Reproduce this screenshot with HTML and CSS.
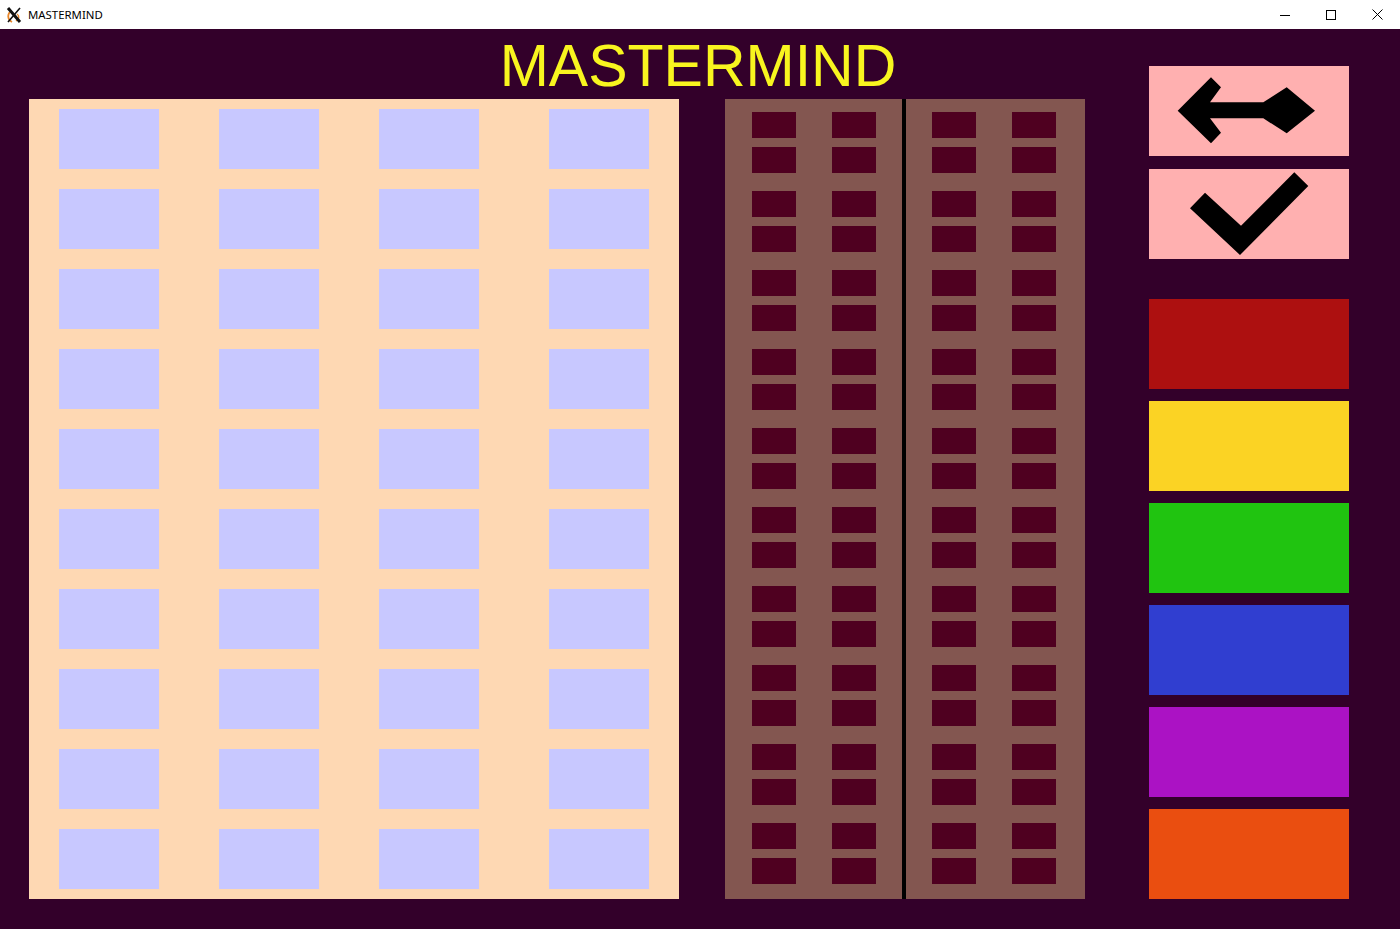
FILE: index.html
```html
<!DOCTYPE html>
<html>
<head>
<meta charset="UTF-8">
<title>MASTERMIND</title>
<link rel="stylesheet" href="styles.css">
</head>
<body>
<div class="titlebar">
	<div class="app">
		<svg class="logo" width="16" height="18" viewBox="0 0 16 18">
			<path d="M6 16 C1 13 1 7 6 5" fill="none" stroke="#e8862a" stroke-width="1.8"/>
			<path d="M11 8 C14 10 13 13 10 15" fill="none" stroke="#e8862a" stroke-width="1.4"/>
			<path d="M2 2 L14 16" stroke="#111" stroke-width="3"/>
			<path d="M14 2 L2 16" stroke="#111" stroke-width="1.6"/>
		</svg>
		<span class="app_name">MASTERMIND</span>
	</div>
	<div class="controls">
		<span class="ctl"><svg width="10" height="10" viewBox="0 0 10 10"><path d="M0 5.5 H10" stroke="#000" stroke-width="1"/></svg></span>
		<span class="ctl"><svg width="10" height="10" viewBox="0 0 10 10"><rect x="0.5" y="0.5" width="9" height="9" fill="none" stroke="#000" stroke-width="1"/></svg></span>
		<span class="ctl"><svg width="11" height="11" viewBox="0 0 11 11"><path d="M0.5 0.5 L10.5 10.5 M10.5 0.5 L0.5 10.5" stroke="#000" stroke-width="1"/></svg></span>
	</div>
</div>
<div class="game">
	<h1 class="title">MASTERMIND</h1>
	<div class="board" id="board"></div>
	<div class="score">
		<div class="half"></div>
		<div class="divider"></div>
		<div class="half right"></div>
	</div>
	<div class="side">
		<a class="btn" href="javascript:;">
			<svg width="200" height="90" viewBox="0 0 200 90">
				<polygon points="28.7,44.7 62,11.3 72,21.3 61,36.3 114.3,36.3 137.7,21.3 166,44.7 137.7,67.3 114.3,52.3 61,52.3 72,66.7 62,77.3" fill="#000"/>
			</svg>
		</a>
		<a class="btn" href="javascript:;">
			<svg width="200" height="90" viewBox="0 0 200 90">
				<polygon points="56,23.7 41,39.3 91,86 159.3,17 145.3,3.3 92,56.7" fill="#000"/>
			</svg>
		</a>
		<div class="colors">
			<a class="color red" href="javascript:;"></a>
			<a class="color yellow" href="javascript:;"></a>
			<a class="color green" href="javascript:;"></a>
			<a class="color blue" href="javascript:;"></a>
			<a class="color purple" href="javascript:;"></a>
			<a class="color orange" href="javascript:;"></a>
		</div>
	</div>
</div>
<script>
	"use strict"
	var board = document.getElementById('board');
	for(var i=0;i<40;i++){
		var hole = document.createElement('span');
		hole.className = 'hole';
		board.appendChild(hole);
	}
	// petits trous de score
	var halves = document.querySelectorAll('.half');
	for(var h=0;h<halves.length;h++){
		for(var r=0;r<10;r++){
			var group = document.createElement('div');
			group.className = 'group';
			for(var k=0;k<4;k++){
				var pin = document.createElement('span');
				pin.className = 'pin';
				group.appendChild(pin);
			}
			halves[h].appendChild(group);
		}
	}
</script>
</body>
</html>
```

FILE: styles.css
```css
*{margin: 0;padding: 0;box-sizing: border-box;}
html,body{
	width: 1400px;
	height: 929px;
	overflow: hidden;
	background: #33002a;
}
/* barre de fenetre */
.titlebar{
	height: 29px;
	background: #fff;
	display: flex;
	justify-content: space-between;
	align-items: center;
}
.app{
	display: flex;
	align-items: center;
	padding-left: 6px;
	gap: 6px;
}
.logo{display: block;}
.app_name{
	font: 11.4px "Noto Sans", "DejaVu Sans", sans-serif;
	color: #000;
}
.controls{
	display: flex;
	height: 29px;
}
.ctl{
	width: 46px;
	height: 29px;
	display: flex;
	align-items: center;
	justify-content: center;
}
.ctl svg{display: block;}

/* jeu */
.game{
	display: grid;
	grid-template-columns: 29px 650px 46px 360px 64px 200px 1fr;
	grid-template-rows: 70px 800px;
	height: 900px;
}
.title{
	grid-column: 1 / -1;
	grid-row: 1;
	text-align: center;
	font: normal 59px/59px "Liberation Sans", Arial, sans-serif;
	color: #f8f51f;
	padding-top: 8px;
	padding-right: 4px;
}
.board{
	grid-column: 2;
	grid-row: 2;
	background: #fed8b3;
	padding: 10px 30px;
	display: grid;
	grid-template-columns: 160px 160px 170px 100px;
	grid-auto-rows: 60px;
	row-gap: 20px;
}
.hole{
	display: block;
	width: 100px;
	height: 60px;
	background: #c8c8ff;
}
.score{
	grid-column: 4;
	grid-row: 2;
	background: #835650;
	display: flex;
}
.half{
	width: 177px;
	padding: 13px 0 0 27px;
	display: flex;
	flex-direction: column;
	gap: 18px;
}
.half.right{
	width: 179px;
	padding-left: 26px;
}
.divider{
	width: 4px;
	background: #000;
}
.group{
	display: grid;
	grid-template-columns: 44px 44px;
	grid-auto-rows: 26px;
	column-gap: 36px;
	row-gap: 9px;
}
.pin{
	display: block;
	background: #4f0020;
}
.side{
	grid-column: 6;
	grid-row: 1 / 3;
	margin-top: 37px;
	display: flex;
	flex-direction: column;
	gap: 13px;
}
.btn{
	display: block;
	height: 90px;
	background: #ffb0b0;
}
.btn svg{display: block;}
.colors{
	margin-top: 27px;
	display: flex;
	flex-direction: column;
	gap: 12px;
}
.color{
	display: block;
	height: 90px;
}
.red{background: #ad1010;}
.yellow{background: #fbd324;}
.green{background: #20c410;}
.blue{background: #303ed0;}
.purple{background: #ab12c4;}
.orange{background: #ea4e10;}
```
